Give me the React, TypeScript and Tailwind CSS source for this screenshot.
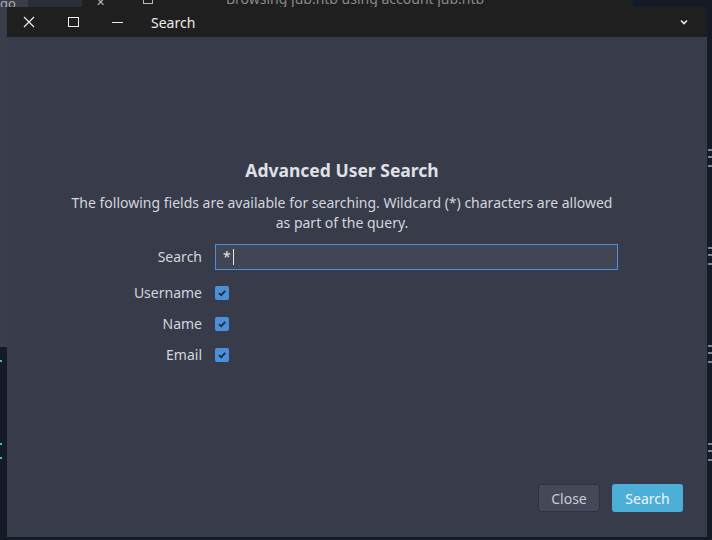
import React from 'react';

const font = { fontFamily: '"Noto Sans", "Open Sans", sans-serif' };

function Check() {
  return (
    <span className="flex h-[14px] w-[14px] items-center justify-center rounded-[2px] bg-[#4a90d9]">
      <svg width="10" height="10" viewBox="0 0 10 10">
        <path d="M2 5.2 L4.2 7.3 L8.2 2.8" fill="none" stroke="#1f2633" strokeWidth="1.8" />
      </svg>
    </span>
  );
}

function Row({ label, children, className }: { label: string; children: React.ReactNode; className?: string }) {
  return (
    <div className={`flex items-center gap-[13px] ${className ?? ''}`}>
      <span className="w-[140px] text-right">{label}</span>
      {children}
    </div>
  );
}

export default function App() {
  return (
    <div className="relative h-[540px] w-[712px] overflow-hidden bg-[#141b26]" style={font}>
      {/* desktop behind the dialog */}
      <div className="absolute left-0 top-0 flex h-[7px] w-[712px]">
        <div className="w-[28px] bg-[#3a3c48] text-[13px] leading-[7px] text-[#aab0bb]">go</div>
        <div className="w-[54px] bg-[#2b2d38]" />
        <div className="relative w-[551px] overflow-hidden bg-[#1f1f1f]">
          <span className="absolute left-[144px] top-[-12px] text-[14px] text-[#8a8a8a]">Browsing jub.htb using account jub.htb</span>
          <span className="absolute left-[14px] top-[-6px] text-[11px] text-[#bbbbbb]">✕</span>
          <span className="absolute left-[61px] top-[-6px] h-[10px] w-[10px] border border-[#bbbbbb]" />
        </div>
      </div>
      <div className="absolute left-0 top-[7px] h-[340px] w-[7px] bg-[#3a3d4a]" />
      <div className="absolute left-0 top-[360px] h-[2px] w-[2px] bg-[#2bd3a0]" />
      <div className="absolute left-0 top-[443px] h-[2px] w-[2px] bg-[#2bd3a0]" />
      <div className="absolute left-0 top-[457px] h-[2px] w-[2px] bg-[#2bd3a0]" />
      {[149, 156, 165, 247, 254, 263, 345, 352, 361, 443, 450, 459].map((y) => (
        <div key={y} className="absolute left-[708px] h-[2px] w-[4px] bg-[#7c8398]" style={{ top: y }} />
      ))}

      {/* dialog */}
      <div className="absolute left-[7px] top-[7px] flex h-[530px] w-[700px] flex-col bg-[#383b4a]">
        <div className="flex h-[30px] items-center bg-[#1f1f1f] text-[#ececec]">
          <svg className="ml-[16px]" width="12" height="12" viewBox="0 0 12 12">
            <path d="M1 1 L11 11 M11 1 L1 11" stroke="#ececec" strokeWidth="1.2" />
          </svg>
          <span className="ml-[33px] h-[10px] w-[11px] border border-[#ececec]" />
          <span className="ml-[33px] h-px w-[11px] bg-[#ececec]" />
          <span className="ml-[28px] text-[14px]">Search</span>
          <svg className="ml-auto mr-[18px]" width="10" height="8" viewBox="0 0 10 8">
            <path d="M2 2.5 L5 5.5 L8 2.5" fill="none" stroke="#ececec" strokeWidth="1.6" />
          </svg>
        </div>

        <div className="flex flex-1 flex-col pl-[55px] pr-[85px]">
          <div className="mt-[120px] text-center text-[17.5px] font-bold leading-[26px] text-[#dfe1e6]">Advanced User Search</div>
          <p className="mt-[10px] text-center text-[14px] leading-[20px] text-[#d3d6dd]">
            The following fields are available for searching. Wildcard (*) characters are allowed
            <br />
            as part of the query.
          </p>

          <div className="mt-[11px] flex flex-col text-[14px] leading-[20px] text-[#d3d6dd]">
            <Row label="Search">
              <div className="flex h-[26px] w-[403px] items-center border border-[#4a8fe0] bg-[#424654] pl-[7px] text-[#e4e6ea]">
                <span>*</span>
                <span className="ml-[2px] h-[16px] w-px bg-[#e4e6ea]" />
              </div>
            </Row>
            <Row label="Username" className="mt-[13px]">
              <Check />
            </Row>
            <Row label="Name" className="mt-[11px]">
              <Check />
            </Row>
            <Row label="Email" className="mt-[11px]">
              <Check />
            </Row>
          </div>

          <div className="mt-auto mb-[25px] mr-[-61px] flex justify-end gap-[12px] text-[14px]">
            <button className="h-[28px] w-[62px] rounded-[3px] border border-[#2e3140] bg-[#444858] text-[#c9ccd4]">Close</button>
            <button className="h-[28px] w-[71px] rounded-[3px] bg-[#4bafd8] text-[#f2f6f9]">Search</button>
          </div>
        </div>
      </div>
    </div>
  );
}
